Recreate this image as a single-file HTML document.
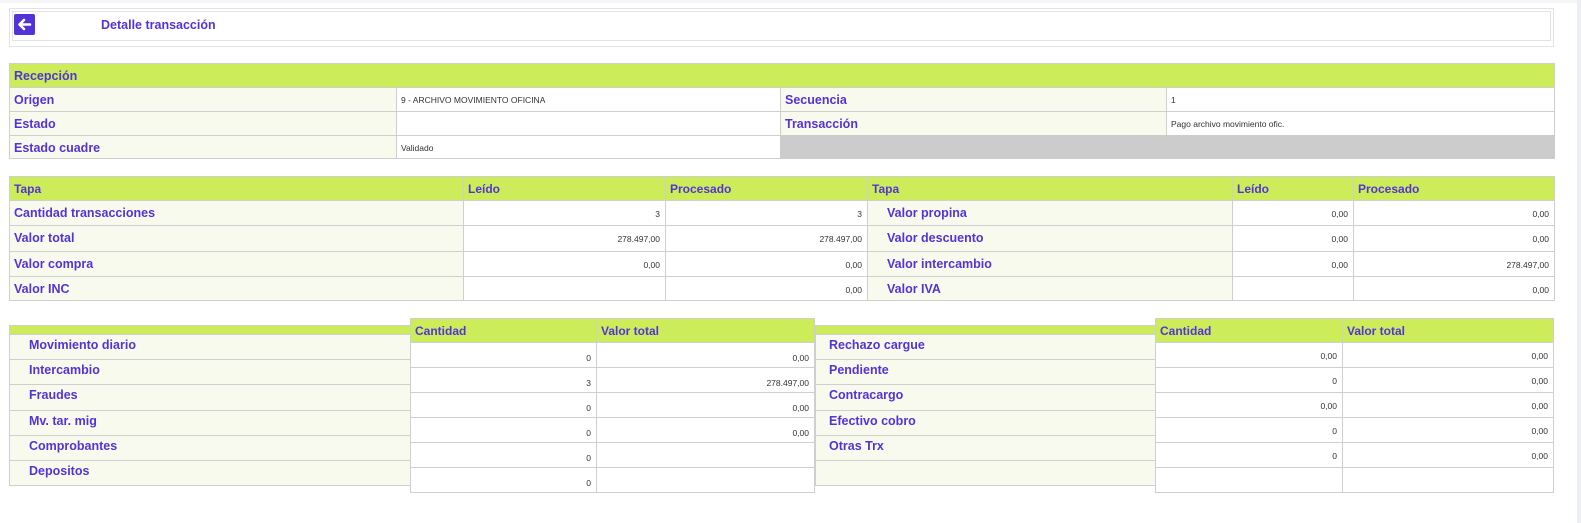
<!DOCTYPE html>
<html style="overflow:hidden"><head><meta charset="utf-8"><style>
html,body{overflow:hidden}
body{margin:0;width:1581px;height:523px;background:#fff;position:relative;font-family:"Liberation Sans",sans-serif}
.c{position:absolute;box-sizing:border-box;border:1px solid #cfcfcf;white-space:nowrap;overflow:hidden}
.h{background:#ccec5a;color:#5433d6;font-weight:bold;font-size:12px;padding:5px 0 0 4px}
.l{background:#f8faee;color:#5433d6;font-weight:bold;font-size:12.5px;padding:5px 0 0 4px}
.i{padding-left:19px}
.v{background:#fff;color:#333;font-size:8.5px;text-align:right;padding:8px 5px 0 0}
.t{background:#fff;color:#333;font-size:8.5px;padding:7px 0 0 4px}
.bl{padding-top:3px}
.bv{padding-top:10px}
</style></head><body>
<div style="position:absolute;left:1577px;top:0;width:4px;height:523px;background:#eceef2"></div>
<div style="position:absolute;left:0;top:0;width:1577px;height:3px;background:#f6f6f6"></div>
<div class="c" style="left:9px;top:8px;width:1545px;height:39px;border-color:#e2e2ea"></div>
<div class="c" style="left:12px;top:11px;width:1539px;height:30px;border-color:#e2e2ea"></div>
<div style="position:absolute;left:14px;top:14px;width:21px;height:21px;background:#5233d8;border-radius:2px">
<svg width="21" height="21" viewBox="0 0 21 21"><path d="M16 10.5H6M10 6L5.5 10.5 10 15" stroke="#fff" stroke-width="2.6" fill="none" stroke-linecap="round" stroke-linejoin="round"/></svg></div>
<div style="position:absolute;left:101px;top:18px;font-size:12.5px;font-weight:bold;color:#5433d6">Detalle transacción</div>

<div class="c h" style="left:9px;top:63px;width:1546px;height:25px;font-size:12.5px">Recepción</div>
<div class="c l" style="left:9px;top:87px;width:388px;height:25px">Origen</div>
<div class="c t" style="left:396px;top:87px;width:385px;height:25px">9 - ARCHIVO MOVIMIENTO OFICINA</div>
<div class="c l" style="left:780px;top:87px;width:387px;height:25px">Secuencia</div>
<div class="c t" style="left:1166px;top:87px;width:389px;height:25px">1</div>
<div class="c l" style="left:9px;top:111px;width:388px;height:25px">Estado</div>
<div class="c t" style="left:396px;top:111px;width:385px;height:25px"></div>
<div class="c l" style="left:780px;top:111px;width:387px;height:25px">Transacción</div>
<div class="c t" style="left:1166px;top:111px;width:389px;height:25px">Pago archivo movimiento ofic.</div>
<div class="c l" style="left:9px;top:135px;width:388px;height:24px">Estado cuadre</div>
<div class="c t" style="left:396px;top:135px;width:385px;height:24px">Validado</div>
<div class="c" style="left:780px;top:135px;width:775px;height:24px;background:#cccccc;border:none"></div>

<div class="c h" style="left:9px;top:176px;width:455px;height:25px">Tapa</div>
<div class="c h" style="left:463px;top:176px;width:203px;height:25px">Leído</div>
<div class="c h" style="left:665px;top:176px;width:203px;height:25px">Procesado</div>
<div class="c l" style="left:9px;top:200px;width:455px;height:26px">Cantidad transacciones</div>
<div class="c v" style="left:463px;top:200px;width:203px;height:26px">3</div>
<div class="c v" style="left:665px;top:200px;width:203px;height:26px">3</div>
<div class="c l" style="left:9px;top:225px;width:455px;height:27px">Valor total</div>
<div class="c v" style="left:463px;top:225px;width:203px;height:27px">278.497,00</div>
<div class="c v" style="left:665px;top:225px;width:203px;height:27px">278.497,00</div>
<div class="c l" style="left:9px;top:251px;width:455px;height:26px">Valor compra</div>
<div class="c v" style="left:463px;top:251px;width:203px;height:26px">0,00</div>
<div class="c v" style="left:665px;top:251px;width:203px;height:26px">0,00</div>
<div class="c l" style="left:9px;top:276px;width:455px;height:25px">Valor INC</div>
<div class="c v" style="left:463px;top:276px;width:203px;height:25px"></div>
<div class="c v" style="left:665px;top:276px;width:203px;height:25px">0,00</div>

<div class="c h" style="left:867px;top:176px;width:366px;height:25px">Tapa</div>
<div class="c h" style="left:1232px;top:176px;width:122px;height:25px">Leído</div>
<div class="c h" style="left:1353px;top:176px;width:202px;height:25px">Procesado</div>
<div class="c l i" style="left:867px;top:200px;width:366px;height:26px">Valor propina</div>
<div class="c v" style="left:1232px;top:200px;width:122px;height:26px">0,00</div>
<div class="c v" style="left:1353px;top:200px;width:202px;height:26px">0,00</div>
<div class="c l i" style="left:867px;top:225px;width:366px;height:27px">Valor descuento</div>
<div class="c v" style="left:1232px;top:225px;width:122px;height:27px">0,00</div>
<div class="c v" style="left:1353px;top:225px;width:202px;height:27px">0,00</div>
<div class="c l i" style="left:867px;top:251px;width:366px;height:26px">Valor intercambio</div>
<div class="c v" style="left:1232px;top:251px;width:122px;height:26px">0,00</div>
<div class="c v" style="left:1353px;top:251px;width:202px;height:26px">278.497,00</div>
<div class="c l i" style="left:867px;top:276px;width:366px;height:25px">Valor IVA</div>
<div class="c v" style="left:1232px;top:276px;width:122px;height:25px"></div>
<div class="c v" style="left:1353px;top:276px;width:202px;height:25px">0,00</div>

<div class="c h" style="left:9px;top:325px;width:402px;height:10px;padding:0"></div>
<div class="c l i bl" style="left:9px;top:334px;width:402px;height:26px">Movimiento diario</div>
<div class="c l i bl" style="left:9px;top:359px;width:402px;height:26px">Intercambio</div>
<div class="c l i bl" style="left:9px;top:384px;width:402px;height:27px">Fraudes</div>
<div class="c l i bl" style="left:9px;top:410px;width:402px;height:26px">Mv. tar. mig</div>
<div class="c l i bl" style="left:9px;top:435px;width:402px;height:26px">Comprobantes</div>
<div class="c l i bl" style="left:9px;top:460px;width:402px;height:26px">Depositos</div>
<div class="c h" style="left:410px;top:318px;width:187px;height:25px">Cantidad</div>
<div class="c h" style="left:596px;top:318px;width:219px;height:25px">Valor total</div>
<div class="c v bv" style="left:410px;top:342px;width:187px;height:26px">0</div>
<div class="c v bv" style="left:596px;top:342px;width:219px;height:26px">0,00</div>
<div class="c v bv" style="left:410px;top:367px;width:187px;height:26px">3</div>
<div class="c v bv" style="left:596px;top:367px;width:219px;height:26px">278.497,00</div>
<div class="c v bv" style="left:410px;top:392px;width:187px;height:26px">0</div>
<div class="c v bv" style="left:596px;top:392px;width:219px;height:26px">0,00</div>
<div class="c v bv" style="left:410px;top:417px;width:187px;height:26px">0</div>
<div class="c v bv" style="left:596px;top:417px;width:219px;height:26px">0,00</div>
<div class="c v bv" style="left:410px;top:442px;width:187px;height:26px">0</div>
<div class="c v bv" style="left:596px;top:442px;width:219px;height:26px"></div>
<div class="c v bv" style="left:410px;top:467px;width:187px;height:26px">0</div>
<div class="c v bv" style="left:596px;top:467px;width:219px;height:26px"></div>

<div class="c h" style="left:815px;top:325px;width:341px;height:10px;padding:0"></div>
<div class="c l bl" style="left:815px;top:334px;width:341px;height:26px;padding-left:13px">Rechazo cargue</div>
<div class="c l bl" style="left:815px;top:359px;width:341px;height:26px;padding-left:13px">Pendiente</div>
<div class="c l bl" style="left:815px;top:384px;width:341px;height:27px;padding-left:13px">Contracargo</div>
<div class="c l bl" style="left:815px;top:410px;width:341px;height:26px;padding-left:13px">Efectivo cobro</div>
<div class="c l bl" style="left:815px;top:435px;width:341px;height:26px;padding-left:13px">Otras Trx</div>
<div class="c l bl" style="left:815px;top:460px;width:341px;height:26px"></div>
<div class="c h" style="left:1155px;top:318px;width:188px;height:25px">Cantidad</div>
<div class="c h" style="left:1342px;top:318px;width:212px;height:25px">Valor total</div>
<div class="c v" style="left:1155px;top:342px;width:188px;height:26px">0,00</div>
<div class="c v" style="left:1342px;top:342px;width:212px;height:26px">0,00</div>
<div class="c v" style="left:1155px;top:367px;width:188px;height:26px">0</div>
<div class="c v" style="left:1342px;top:367px;width:212px;height:26px">0,00</div>
<div class="c v" style="left:1155px;top:392px;width:188px;height:26px">0,00</div>
<div class="c v" style="left:1342px;top:392px;width:212px;height:26px">0,00</div>
<div class="c v" style="left:1155px;top:417px;width:188px;height:26px">0</div>
<div class="c v" style="left:1342px;top:417px;width:212px;height:26px">0,00</div>
<div class="c v" style="left:1155px;top:442px;width:188px;height:26px">0</div>
<div class="c v" style="left:1342px;top:442px;width:212px;height:26px">0,00</div>
<div class="c v" style="left:1155px;top:467px;width:188px;height:26px"></div>
<div class="c v" style="left:1342px;top:467px;width:212px;height:26px"></div>
</body></html>
